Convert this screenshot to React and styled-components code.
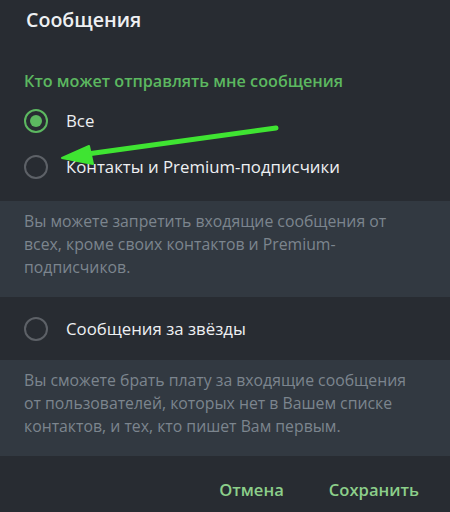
import React, { useState } from 'react'
import styled, { createGlobalStyle } from 'styled-components'

const colors = {
  bg: '#282c32',
  panel: '#323941',
  white: '#eef0f2',
  muted: '#7c858e',
  green: '#5cb860',
  button: '#8ccf8a',
  ring: '#5d6167',
  arrow: '#3fe432',
}

const GlobalStyle = createGlobalStyle`
  html, body {
    margin: 0;
    padding: 0;
    background: ${colors.bg};
  }
  body {
    font-family: "Open Sans", "Noto Sans", sans-serif;
  }
`

const options = [
  { id: 'all', label: 'Все' },
  { id: 'contacts', label: 'Контакты и Premium-подписчики' },
]

export default function App() {
  const [selected, setSelected] = useState('all')

  return (
    <Dialog>
      <GlobalStyle />
      <Title>Сообщения</Title>
      <Section>
        <SectionTitle>Кто может отправлять мне сообщения</SectionTitle>
        {options.map((item) => (
          <RadioRow key={item.id} onClick={() => setSelected(item.id)}>
            <Radio $checked={selected === item.id} />
            <Label>{item.label}</Label>
          </RadioRow>
        ))}
        <Arrow viewBox="0 0 450 512" aria-hidden="true">
          <line x1="276" y1="128" x2="80" y2="155" stroke={colors.arrow} strokeWidth="5" strokeLinecap="round" />
          <polygon points="62,158 89,146 93,164" fill={colors.arrow} stroke={colors.arrow} strokeWidth="2" strokeLinejoin="round" />
        </Arrow>
      </Section>
      <Note>
        Вы можете запретить входящие сообщения от всех, кроме своих контактов и Premium-подписчиков.
      </Note>
      <StarsRow onClick={() => setSelected('stars')}>
        <Radio $checked={selected === 'stars'} />
        <Label>Сообщения за звёзды</Label>
      </StarsRow>
      <Note>
        Вы сможете брать плату за входящие сообщения от пользователей, которых нет в Вашем списке контактов, и тех, кто пишет Вам первым.
      </Note>
      <Footer>
        <Button>Отмена</Button>
        <Button>Сохранить</Button>
      </Footer>
    </Dialog>
  )
}

const Dialog = styled.div`
  position: relative;
  width: 450px;
  height: 512px;
  background: ${colors.bg};
  display: flex;
  flex-direction: column;
  overflow: hidden;
`

const Title = styled.h1`
  margin: 0;
  padding: 7px 26px 0;
  height: 34px;
  font-size: 19.6px;
  font-weight: 600;
  line-height: 26px;
  color: ${colors.white};
`

const Section = styled.div`
  padding: 29px 0 11px;
`

const SectionTitle = styled.h2`
  margin: 0 0 6px;
  padding: 0 24px;
  font-size: 16.2px;
  font-weight: 600;
  line-height: 22px;
  color: ${colors.green};
`

const RadioRow = styled.div`
  display: flex;
  align-items: center;
  gap: 18px;
  height: 46px;
  padding: 0 24px;
  cursor: pointer;
`

const StarsRow = styled(RadioRow)`
  height: 63px;
`

const Radio = styled.span`
  box-sizing: border-box;
  flex: none;
  width: 24px;
  height: 24px;
  border-radius: 50%;
  border: 2px solid ${({ $checked }) => ($checked ? colors.green : colors.ring)};
  display: flex;
  align-items: center;
  justify-content: center;
  &::after {
    content: '';
    width: 12px;
    height: 12px;
    border-radius: 50%;
    background: ${colors.green};
    display: ${({ $checked }) => ($checked ? 'block' : 'none')};
  }
`

const Label = styled.span`
  font-size: 16.8px;
  line-height: 22px;
  color: ${colors.white};
`

const Note = styled.p`
  margin: 0;
  box-sizing: border-box;
  height: 96px;
  padding: 9px 26px 0 24px;
  background: ${colors.panel};
  font-size: 15.8px;
  line-height: 23px;
  color: ${colors.muted};
`

const Footer = styled.div`
  flex: 1;
  display: flex;
  justify-content: flex-end;
  align-items: center;
  gap: 45px;
  padding: 10px 31px 0 0;
`

const Button = styled.button`
  background: none;
  border: 0;
  padding: 0;
  font-family: inherit;
  font-size: 16.6px;
  font-weight: 600;
  color: ${colors.button};
  cursor: pointer;
`

const Arrow = styled.svg`
  position: absolute;
  left: 0;
  top: 0;
  width: 450px;
  height: 512px;
  pointer-events: none;
`
